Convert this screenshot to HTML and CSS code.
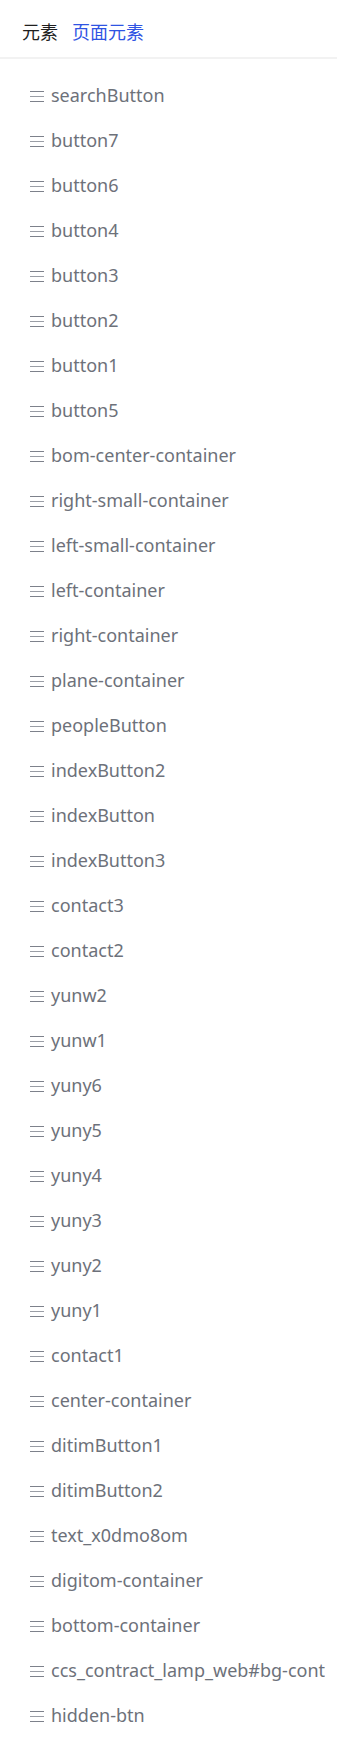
FILE: index.html
```html
<!DOCTYPE html>
<html lang="zh">
<head>
<meta charset="utf-8">
<link rel="stylesheet" href="styles.css">
</head>
<body>
<div class="panel">
  <div class="tabs">
    <span class="tab">元素</span>
    <span class="tab active">页面元素</span>
  </div>
  <ul class="list">
    <li class="item"><span class="ico"></span><span class="name">searchButton</span></li>
    <li class="item"><span class="ico"></span><span class="name">button7</span></li>
    <li class="item"><span class="ico"></span><span class="name">button6</span></li>
    <li class="item"><span class="ico"></span><span class="name">button4</span></li>
    <li class="item"><span class="ico"></span><span class="name">button3</span></li>
    <li class="item"><span class="ico"></span><span class="name">button2</span></li>
    <li class="item"><span class="ico"></span><span class="name">button1</span></li>
    <li class="item"><span class="ico"></span><span class="name">button5</span></li>
    <li class="item"><span class="ico"></span><span class="name">bom-center-container</span></li>
    <li class="item"><span class="ico"></span><span class="name">right-small-container</span></li>
    <li class="item"><span class="ico"></span><span class="name">left-small-container</span></li>
    <li class="item"><span class="ico"></span><span class="name">left-container</span></li>
    <li class="item"><span class="ico"></span><span class="name">right-container</span></li>
    <li class="item"><span class="ico"></span><span class="name">plane-container</span></li>
    <li class="item"><span class="ico"></span><span class="name">peopleButton</span></li>
    <li class="item"><span class="ico"></span><span class="name">indexButton2</span></li>
    <li class="item"><span class="ico"></span><span class="name">indexButton</span></li>
    <li class="item"><span class="ico"></span><span class="name">indexButton3</span></li>
    <li class="item"><span class="ico"></span><span class="name">contact3</span></li>
    <li class="item"><span class="ico"></span><span class="name">contact2</span></li>
    <li class="item"><span class="ico"></span><span class="name">yunw2</span></li>
    <li class="item"><span class="ico"></span><span class="name">yunw1</span></li>
    <li class="item"><span class="ico"></span><span class="name">yuny6</span></li>
    <li class="item"><span class="ico"></span><span class="name">yuny5</span></li>
    <li class="item"><span class="ico"></span><span class="name">yuny4</span></li>
    <li class="item"><span class="ico"></span><span class="name">yuny3</span></li>
    <li class="item"><span class="ico"></span><span class="name">yuny2</span></li>
    <li class="item"><span class="ico"></span><span class="name">yuny1</span></li>
    <li class="item"><span class="ico"></span><span class="name">contact1</span></li>
    <li class="item"><span class="ico"></span><span class="name">center-container</span></li>
    <li class="item"><span class="ico"></span><span class="name">ditimButton1</span></li>
    <li class="item"><span class="ico"></span><span class="name">ditimButton2</span></li>
    <li class="item"><span class="ico"></span><span class="name">text_x0dmo8om</span></li>
    <li class="item"><span class="ico"></span><span class="name">digitom-container</span></li>
    <li class="item"><span class="ico"></span><span class="name">bottom-container</span></li>
    <li class="item"><span class="ico"></span><span class="name">ccs_contract_lamp_web#bg-container</span></li>
    <li class="item"><span class="ico"></span><span class="name">hidden-btn</span></li>
  </ul>
</div>
</body>
</html>
```

FILE: styles.css
```css
html, body {
  margin: 0;
  padding: 0;
  background: #ffffff;
}
body {
  font-family: "Noto Sans", "Noto Sans CJK SC", sans-serif;
}
.panel {
  width: 337px;
}
.tabs {
  display: flex;
  align-items: center;
  gap: 14px;
  box-sizing: border-box;
  height: 59px;
  padding: 4px 0 0 22px;
  border-bottom: 2px solid #f2f2f2;
  font-family: "Noto Sans CJK SC", sans-serif;
  font-size: 18px;
  line-height: 1;
}
.tab {
  color: #1f1f1f;
}
.tab.active {
  color: #2f54e3;
}
.list {
  list-style: none;
  margin: 0;
  padding: 13px 12px 0 30px;
  overflow: hidden;
}
.item {
  display: flex;
  align-items: center;
  gap: 7px;
  height: 45px;
  white-space: nowrap;
  overflow: hidden;
}
.ico {
  flex: none;
  width: 14px;
  height: 11px;
  margin-top: 3px;
  background:
    linear-gradient(#7d818b, #7d818b) 0 0 / 100% 1px no-repeat,
    linear-gradient(#9a9ea6, #9a9ea6) 0 5px / 100% 1px no-repeat,
    linear-gradient(#7d818b, #7d818b) 0 10px / 100% 1px no-repeat;
}
.name {
  font-size: 18px;
  color: #6d717a;
}
```
